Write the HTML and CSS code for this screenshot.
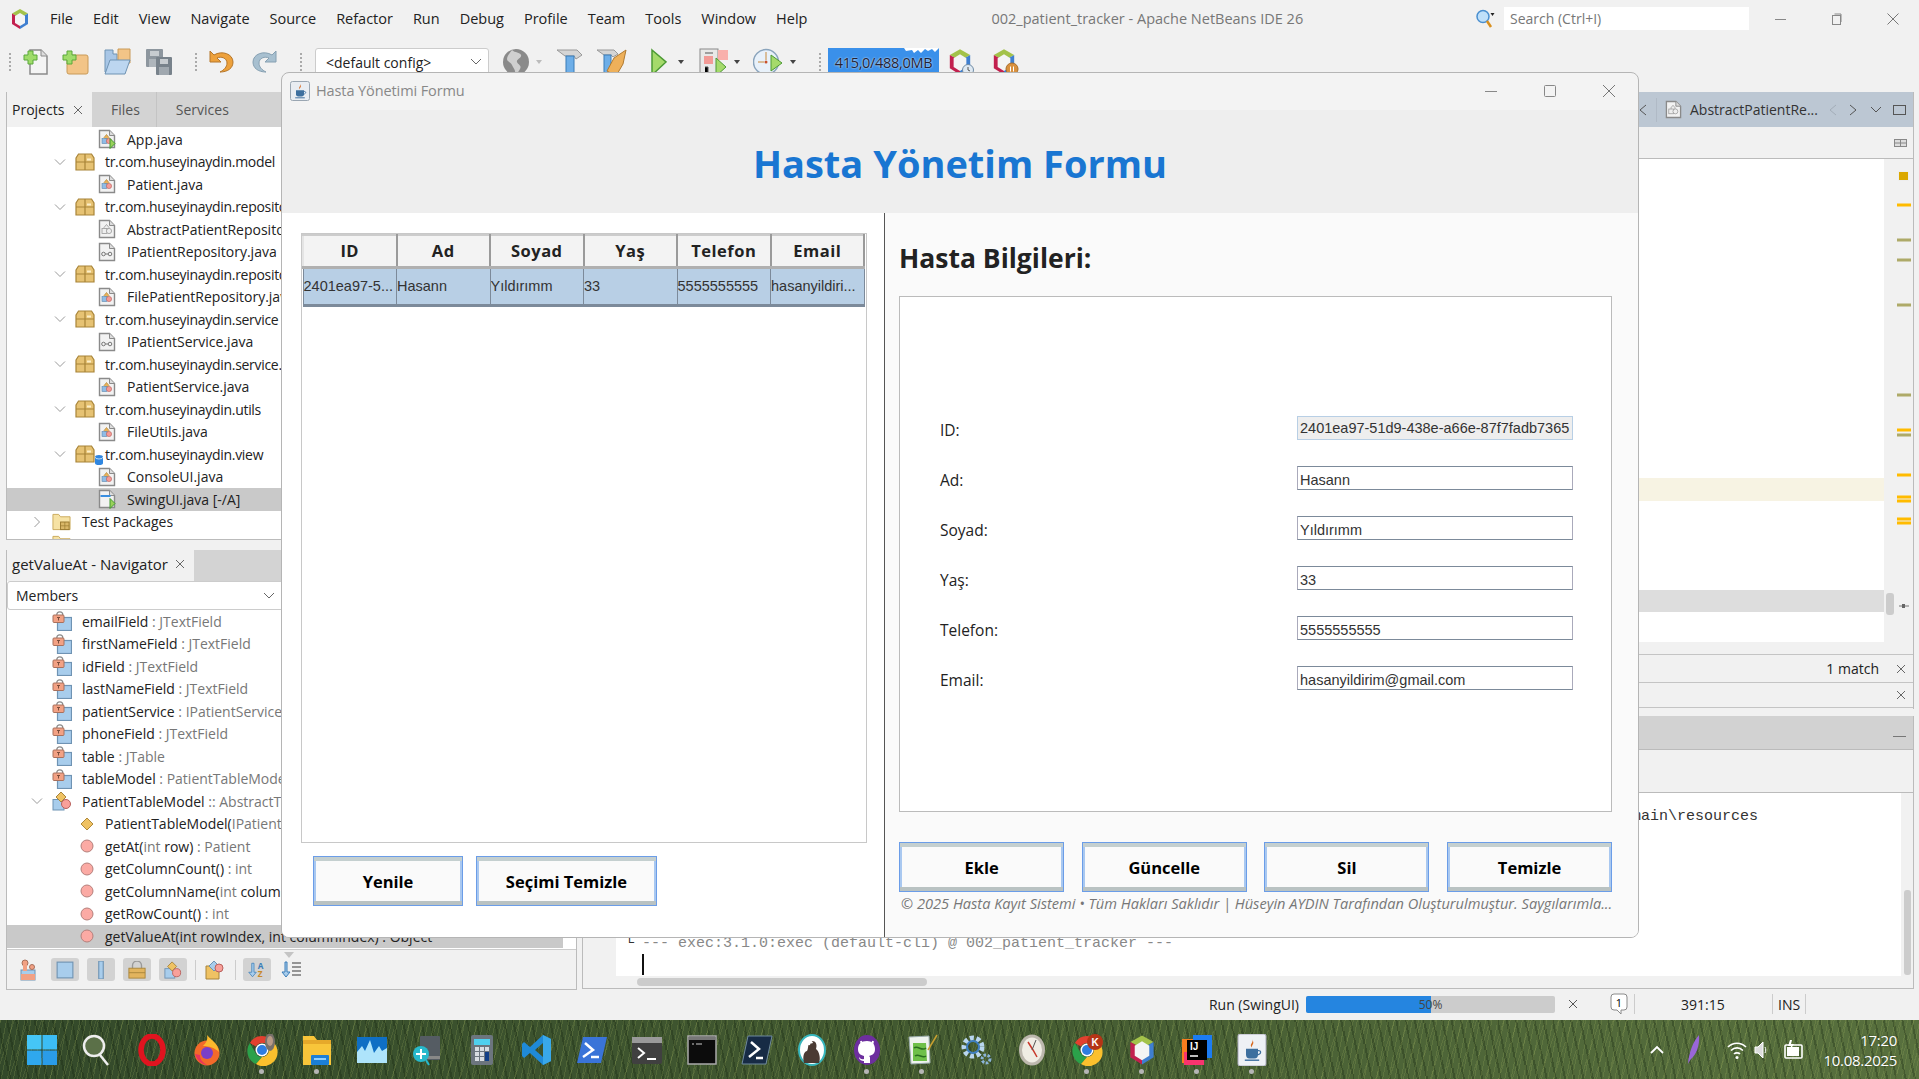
FILE: index.html
```html
<!DOCTYPE html>
<html lang="tr">
<head>
  <meta charset="UTF-8">
  <title>002_patient_tracker - Apache NetBeans IDE 26</title>
  <link rel="stylesheet" href="styles.css">
</head>
<body>

  <!-- shared icons -->
  <svg class="defs" aria-hidden="true">
    <symbol id="nb" viewBox="0 0 20 22">
      <path d="M10 1 2 5.500 10 10l8-4.500z" fill="#a3c24a"/>
      <path d="M2 5.500V16l8 5V10z" fill="#c2204e"/>
      <path d="M18 5.500V16l-8 5V10z" fill="#3f7fd0"/>
      <path d="M10 5 5 8v7l5 3 5-3V8z" fill="#f4f4f4"/>
    </symbol>
    <symbol id="doc" viewBox="0 0 18 20">
      <path d="M1.500 1.500h10l5 5v12h-15z" fill="#f2f2f2" stroke="#8a8a8a" stroke-width="1.400"/>
      <path d="M11.500 1.500v5h5" fill="#ddd" stroke="#8a8a8a"/>
    </symbol>
    <symbol id="shapes" viewBox="0 0 18 20">
      <path d="M8.500 5.500 11 8.500 8.500 11 6 8.500z" fill="#eab25a" stroke="#a87c2c" stroke-width=".6"/>
      <rect x="4" y="9.500" width="5" height="5" fill="#8fbce6" stroke="#5a86ae" stroke-width=".6"/>
      <circle cx="11" cy="12" r="2.600" fill="#f59b96" stroke="#b8605c" stroke-width=".6"/>
    </symbol>
    <symbol id="f-class" viewBox="0 0 18 20"><use href="#doc"/><use href="#shapes"/></symbol>
    <symbol id="f-run" viewBox="0 0 18 20">
      <use href="#doc"/><use href="#shapes"/>
      <path d="M12 9.500l5 5-5 5z" fill="#9ad05a" stroke="#3f9a2e"/>
    </symbol>
    <symbol id="f-abstract" viewBox="0 0 18 20">
      <use href="#doc"/>
      <path d="M8.500 5.500 11 8.500 8.500 11 6 8.500z" fill="#eee" stroke="#999" stroke-width=".8"/>
      <rect x="4" y="9.500" width="5" height="5" fill="#eee" stroke="#999" stroke-width=".8"/>
      <circle cx="11" cy="12" r="2.600" fill="#eee" stroke="#999" stroke-width=".8"/>
    </symbol>
    <symbol id="f-iface" viewBox="0 0 18 20">
      <use href="#doc"/>
      <circle cx="5.500" cy="12" r="1.800" fill="none" stroke="#777"/>
      <circle cx="12" cy="12" r="1.800" fill="none" stroke="#777"/>
      <path d="M7.300 12h2.900" stroke="#777"/>
    </symbol>
    <symbol id="f-swing" viewBox="0 0 18 20">
      <use href="#doc"/>
      <rect x="2.500" y="6" width="10" height="2" fill="#3a8fe0"/>
      <path d="M12 9.500l5 5-5 5z" fill="#9ad05a" stroke="#3f9a2e"/>
    </symbol>
    <symbol id="pkg" viewBox="0 0 20 18">
      <path d="M1 5 3.500 1h13L19 5v12H1z" fill="#e6c273" stroke="#a88438" stroke-width="1.200"/>
      <path d="M1 9h18M10 1v16" stroke="#a88438" stroke-width="1.200"/>
      <rect x="12" y="5.500" width="4" height="2" fill="#fbeec9"/>
    </symbol>
    <symbol id="folder" viewBox="0 0 20 18">
      <path d="M1 1h6l2 2.500h10V17H1z" fill="#f6e2a4" stroke="#c9a95a"/>
      <rect x="9" y="9" width="9" height="8" fill="#d9b768" stroke="#98782f"/>
      <path d="M9 13h9M13.500 9v8" stroke="#98782f" stroke-width=".7"/>
    </symbol>
    <symbol id="field" viewBox="0 0 20 20">
      <rect x="5.500" y="6.500" width="14" height="13" fill="#a8cdec" stroke="#6f93b3" stroke-width="1.200"/>
      <path d="M2.800 4.500V3a3 3 0 0 1 6 0v1.500" fill="none" stroke="#8a8a8a" stroke-width="1.200" transform="translate(2 .8)"/>
      <rect x="1" y="4" width="11" height="7.500" rx="1" fill="#f2a184" stroke="#a8705c"/>
      <path d="M5 6.500h3M6.500 6.500v3" stroke="#7d4d3a"/>
    </symbol>
    <symbol id="navclass" viewBox="0 0 20 20">
      <rect x="1" y="8.500" width="11" height="10.500" fill="#a8cdec" stroke="#6f93b3"/>
      <path d="M9 1l5 5-5 5-5-5z" fill="#efc263" stroke="#a8843a"/>
      <circle cx="14" cy="13" r="4.500" fill="#f8a09a" stroke="#b8605c"/>
    </symbol>
    <symbol id="ctor" viewBox="0 0 14 14"><path d="M7 1l6 6-6 6-6-6z" fill="#efc263" stroke="#b08a3a"/></symbol>
    <symbol id="method" viewBox="0 0 14 14"><circle cx="7" cy="7" r="6" fill="#fbaaa4" stroke="#b57f7b"/></symbol>
    <symbol id="cup" viewBox="0 0 20 20">
      <path d="M10 1c2 3-3 4 0 7-1-2 3-3 0-7z" fill="#d8691f"/>
      <path d="M5 9h10v5a3 3 0 0 1-3 3H8a3 3 0 0 1-3-3z" fill="#3d6f9e"/>
      <path d="M15 10.500c3-.5 3 3-.5 3.500" fill="none" stroke="#3d6f9e"/>
      <path d="M4 18.500h12" stroke="#3d6f9e" stroke-width="1.200"/>
    </symbol>
    <symbol id="chrome" viewBox="0 0 32 32">
      <path d="M16 2a14 14 0 0 1 12.100 7H16a7 7 0 0 0-6.100 3.500L3.900 9A14 14 0 0 1 16 2z" fill="#e2402f"/>
      <path d="M3.900 9l6 10.500A7 7 0 0 0 16 23l-6 7A14 14 0 0 1 3.900 9z" fill="#2ba14a"/>
      <path d="M28.100 9A14 14 0 0 1 10 30l6-7a7 7 0 0 0 6-10.500z" fill="#fbc02d"/>
      <circle cx="16" cy="16" r="6.500" fill="#fff"/><circle cx="16" cy="16" r="5" fill="#2f7de1"/>
    </symbol>
    <symbol id="chev-d" viewBox="0 0 12 12"><path d="M1 3.500l5 5 5-5" fill="none" stroke="#9a9a9a"/></symbol>
    <symbol id="chev-r" viewBox="0 0 12 12"><path d="M3.500 1l5 5-5 5" fill="none" stroke="#9a9a9a"/></symbol>
  </svg>

  <header class="titlebar">
    <svg class="app-logo"><use href="#nb"/></svg>
    <nav class="menu">
      <span>File</span><span>Edit</span><span>View</span><span>Navigate</span><span>Source</span><span>Refactor</span><span>Run</span>
      <span>Debug</span><span>Profile</span><span>Team</span><span>Tools</span><span>Window</span><span>Help</span>
    </nav>
    <div class="app-title">002_patient_tracker - Apache NetBeans IDE 26</div>
    <svg class="search-ic" viewBox="0 0 20 20">
      <circle cx="8" cy="7.500" r="6" fill="#bfe0fa" stroke="#4a8fd0" stroke-width="1.500"/>
      <path d="M12 12l4 6" stroke="#d9901f" stroke-width="2.500"/>
      <path d="M15.500 4h4l-2 3z" fill="#222"/>
    </svg>
    <div class="search-box">Search (Ctrl+I)</div>
    <div class="win-btns">
      <svg viewBox="0 0 12 12"><path d="M0 6.500h11" stroke="#888"/></svg>
      <svg viewBox="0 0 12 12"><rect x="1.500" y="2.500" width="8" height="9" fill="none" stroke="#888"/><path d="M3.500 1h6.500v8" fill="none" stroke="#888"/></svg>
      <svg viewBox="0 0 12 12"><path d="M.5.500l11 11M11.500.500l-11 11" stroke="#777"/></svg>
    </div>
  </header>

  <div class="toolbar">
    <i class="grip g1"></i>
    <svg class="t28 ml11" viewBox="0 0 28 28">
      <path d="M8 2h11l6 6v18H8z" fill="#f4f4f4" stroke="#8a8a8a" stroke-width="1.500"/><path d="M19 2v6h6" fill="#ddd" stroke="#8a8a8a"/>
      <path d="M6 3v4H2v5h4v4h5v-4h4V7h-4V3z" fill="#9fdc6a" stroke="#5aa83a"/>
    </svg>
    <svg class="t28 ml11" viewBox="0 0 28 28">
      <rect x="6" y="7" width="21" height="19" rx="2" fill="#f2c487" stroke="#c99a58"/>
      <path d="M6 3v4H2v5h4v4h5v-4h4V7h-4V3z" fill="#9fdc6a" stroke="#5aa83a"/>
    </svg>
    <svg class="t28 ml14" viewBox="0 0 28 28">
      <path d="M2 2h8v4h4v18H2z" fill="#a8c6e6" stroke="#6f93b3"/>
      <path d="M15 1h12v14H15z" fill="#f2c487" stroke="#c99a58"/>
      <path d="M7 12h20l-5 14H2z" fill="#bcd6f0" stroke="#6f93b3"/>
    </svg>
    <svg class="t28 ml14" viewBox="0 0 28 28">
      <rect x="1" y="1" width="17" height="18" rx="1" fill="#8d969e"/><rect x="5" y="3" width="9" height="5" fill="#c7ccd0"/><rect x="4" y="11" width="11" height="8" fill="#aeb5bb"/>
      <rect x="11" y="9" width="16" height="18" rx="1" fill="#78828b"/><rect x="15" y="11" width="8" height="5" fill="#c7ccd0"/><rect x="14" y="19" width="10" height="8" fill="#a0a8af"/>
    </svg>
    <i class="grip ml22"></i>
    <svg class="t28 ml11" viewBox="0 0 28 28">
      <path d="M2 3v11h11l-4-4c4-2 10 0 10 5 0 4-3 7-7 9 8 0 13-4 13-10C25 6 14 2 6 7z" fill="#eda13c" stroke="#b5762a"/>
    </svg>
    <svg class="t28 ml14" viewBox="0 0 28 28">
      <path d="M26 3v11H15l4-4c-4-2-10 0-10 5 0 4 3 7 7 9-8 0-13-4-13-10C3 6 14 2 22 7z" fill="#a8c0d0" stroke="#86a0b2"/>
    </svg>
    <i class="grip ml22"></i>
    <div class="config ml13"><span>&lt;default config&gt;</span><svg viewBox="0 0 12 8"><path d="M1 1l5 5 5-5" fill="none" stroke="#666"/></svg></div>
    <svg class="t28 ml13" viewBox="0 0 28 28">
      <circle cx="14" cy="14" r="13" fill="#8a8a8a"/>
      <path d="M10 2c3 3 8 2 9 5s-5 4-4 7 5 3 3 7-4 5-5 5c1-4-2-6-3-9s-5-3-5-6 3-6 5-9z" fill="#cfcfcf"/>
    </svg>
    <i class="drop ml6 light"></i>
    <svg class="t28 ml14" viewBox="0 0 28 28">
      <path d="M1 2h20l5 5-6 4-2-3H9z" fill="#d5d5d5" stroke="#999"/>
      <rect x="10" y="8" width="8" height="20" fill="#6daee8" stroke="#3a7db8"/>
    </svg>
    <svg class="t32 ml12" viewBox="0 0 32 28">
      <path d="M1 2h17l4 4-5 3-2-2H8z" fill="#d5d5d5" stroke="#999"/>
      <rect x="8" y="7" width="7" height="21" fill="#6daee8" stroke="#3a7db8"/>
      <path d="M18 10l12-8-3 14-7 12-9-5z" fill="#eeb05a" stroke="#b07a30"/>
    </svg>
    <svg class="t16 ml23" viewBox="0 0 16 28"><path d="M1 2l14 12L1 27z" fill="#a5da6b" stroke="#4c9a34" stroke-width="1.500"/></svg>
    <i class="drop ml11"></i>
    <svg class="t30 ml15" viewBox="0 0 30 28">
      <rect x="1" y="1" width="18" height="26" fill="#e8e8e8" stroke="#8a8a8a"/>
      <rect x="5" y="8" width="9" height="8" fill="#f29a96"/><rect x="19" y="2" width="10" height="10" fill="#f9b0ac"/>
      <path d="M17 10l10 9-10 9z" fill="#a5da6b" stroke="#4c9a34"/>
      <path d="M6 5h8M6 19h3v6H6" stroke="#555"/>
    </svg>
    <i class="drop ml5"></i>
    <svg class="t30 ml13" viewBox="0 0 30 28">
      <circle cx="13" cy="14" r="12.500" fill="#e8f1fa" stroke="#8aa4bc" stroke-width="1.500"/>
      <path d="M13 4v8M5 14h6" stroke="#c88a3a"/><circle cx="13" cy="14" r="1.500" fill="#c8502a"/>
      <path d="M18 7l11 8-11 8z" fill="#a5da6b" stroke="#4c9a34"/>
    </svg>
    <i class="drop ml7"></i>
    <i class="grip ml23"></i>
    <div class="memory ml7">
      <svg viewBox="0 0 111 32" preserveAspectRatio="none"><path d="M0 0h76l2 3 6-1 2 3 4-3 3 3 4-4 3 2 4-2 3 3 4-4v32H0z" fill="#3a90ea"/></svg>
      <span>415,0/488,0MB</span>
    </div>
    <svg class="t28 ml7" viewBox="0 0 28 28"><use href="#nb"/><circle cx="22" cy="22" r="5.500" fill="#dfe9f2" stroke="#6f8ba5"/><path d="M22 19v3l2 1" stroke="#555" fill="none"/></svg>
    <svg class="t30 ml15" viewBox="0 0 30 28"><use href="#nb"/><circle cx="23" cy="21" r="6" fill="#d9913f" stroke="#a96e2a"/><path d="M21.500 18.500v5M24.500 18.500v5" stroke="#fff"/></svg>
  </div>

  <main class="workspace">
    <section class="left-col">
      <div class="panel projects">
        <div class="tabs">
          <div class="tab active">Projects <svg class="x" viewBox="0 0 10 10"><path d="M1 1l8 8M9 1 1 9" stroke="#666"/></svg></div>
          <div class="tab">Files</div>
          <div class="tab">Services</div>
        </div>
        <div class="tree">
          <div class="row file"><svg class="f"><use href="#f-run"/></svg>App.java</div>
          <div class="row pk"><svg class="chev"><use href="#chev-d"/></svg><svg class="p"><use href="#pkg"/></svg>tr.com.huseyinaydin.model</div>
          <div class="row file"><svg class="f"><use href="#f-class"/></svg>Patient.java</div>
          <div class="row pk"><svg class="chev"><use href="#chev-d"/></svg><svg class="p"><use href="#pkg"/></svg>tr.com.huseyinaydin.repository</div>
          <div class="row file"><svg class="f"><use href="#f-abstract"/></svg>AbstractPatientRepository.java</div>
          <div class="row file"><svg class="f"><use href="#f-iface"/></svg>IPatientRepository.java</div>
          <div class="row pk"><svg class="chev"><use href="#chev-d"/></svg><svg class="p"><use href="#pkg"/></svg>tr.com.huseyinaydin.repository.impl</div>
          <div class="row file"><svg class="f"><use href="#f-class"/></svg>FilePatientRepository.java</div>
          <div class="row pk"><svg class="chev"><use href="#chev-d"/></svg><svg class="p"><use href="#pkg"/></svg>tr.com.huseyinaydin.service</div>
          <div class="row file"><svg class="f"><use href="#f-iface"/></svg>IPatientService.java</div>
          <div class="row pk"><svg class="chev"><use href="#chev-d"/></svg><svg class="p"><use href="#pkg"/></svg>tr.com.huseyinaydin.service.impl</div>
          <div class="row file"><svg class="f"><use href="#f-class"/></svg>PatientService.java</div>
          <div class="row pk"><svg class="chev"><use href="#chev-d"/></svg><svg class="p"><use href="#pkg"/></svg>tr.com.huseyinaydin.utils</div>
          <div class="row file"><svg class="f"><use href="#f-class"/></svg>FileUtils.java</div>
          <div class="row pk"><svg class="chev"><use href="#chev-d"/></svg><svg class="p"><use href="#pkg"/></svg><svg class="badge" viewBox="0 0 8 10"><path d="M0 2a4 2 0 0 1 8 0v6a4 2 0 0 1-8 0z" fill="#2f86e0"/><path d="M0 2a4 2 0 0 0 8 0" fill="none" stroke="#bcdcf8"/></svg>tr.com.huseyinaydin.view</div>
          <div class="row file"><svg class="f"><use href="#f-class"/></svg>ConsoleUI.java</div>
          <div class="row file selected"><svg class="f"><use href="#f-swing"/></svg>SwingUI.java [-/A]</div>
          <div class="row top"><svg class="chev"><use href="#chev-r"/></svg><svg class="d"><use href="#folder"/></svg>Test Packages</div>
          <div class="row top"><svg class="chev"><use href="#chev-r"/></svg><svg class="d"><use href="#folder"/></svg>Dependencies</div>
        </div>
      </div>

      <div class="panel navigator">
        <div class="tabs short">
          <div class="tab active nav-tab">getValueAt - Navigator <svg class="x" viewBox="0 0 10 10"><path d="M1 1l8 8M9 1 1 9" stroke="#666"/></svg></div>
        </div>
        <div class="members"><span>Members</span><svg viewBox="0 0 12 8"><path d="M1 1l5 5 5-5" fill="none" stroke="#666"/></svg></div>
        <div class="tree nav-tree">
          <div class="row nf"><svg class="n"><use href="#field"/></svg><span>emailField <em>: JTextField</em></span></div>
          <div class="row nf"><svg class="n"><use href="#field"/></svg><span>firstNameField <em>: JTextField</em></span></div>
          <div class="row nf"><svg class="n"><use href="#field"/></svg><span>idField <em>: JTextField</em></span></div>
          <div class="row nf"><svg class="n"><use href="#field"/></svg><span>lastNameField <em>: JTextField</em></span></div>
          <div class="row nf"><svg class="n"><use href="#field"/></svg><span>patientService <em>: IPatientService</em></span></div>
          <div class="row nf"><svg class="n"><use href="#field"/></svg><span>phoneField <em>: JTextField</em></span></div>
          <div class="row nf"><svg class="n"><use href="#field"/></svg><span>table <em>: JTable</em></span></div>
          <div class="row nf"><svg class="n"><use href="#field"/></svg><span>tableModel <em>: PatientTableModel</em></span></div>
          <div class="row top"><svg class="chev"><use href="#chev-d"/></svg><svg class="n"><use href="#navclass"/></svg><span>PatientTableModel <em>:: AbstractTableModel</em></span></div>
          <div class="row nm"><svg class="m"><use href="#ctor"/></svg><span>PatientTableModel(<em>IPatientService service</em>)</span></div>
          <div class="row nm"><svg class="m"><use href="#method"/></svg><span>getAt(<em>int</em> row) <em>: Patient</em></span></div>
          <div class="row nm"><svg class="m"><use href="#method"/></svg><span>getColumnCount() <em>: int</em></span></div>
          <div class="row nm"><svg class="m"><use href="#method"/></svg><span>getColumnName(<em>int</em> column) <em>: String</em></span></div>
          <div class="row nm"><svg class="m"><use href="#method"/></svg><span>getRowCount() <em>: int</em></span></div>
          <div class="row nm selected short-sel"><svg class="m"><use href="#method"/></svg><span>getValueAt(int rowIndex, int columnIndex) : Object</span></div>
        </div>
        <div class="nav-tools">
          <svg class="nt" viewBox="0 0 16 24"><rect x="1" y="12" width="14" height="10" fill="#a8cdec" stroke="#6f93b3"/><rect x="1" y="16" width="14" height="6" fill="#f2a184"/><circle cx="5" cy="5" r="3" fill="#f2a184" stroke="#a8705c"/><rect x="3" y="7" width="4" height="6" fill="#f2a184"/><circle cx="12" cy="9" r="2.500" fill="#f2a184" stroke="#a8705c"/></svg>
          <span class="nb on"><svg viewBox="0 0 16 16"><rect x="1" y="1" width="14" height="14" fill="#a8cdec" stroke="#6f93b3"/></svg></span>
          <span class="nb on"><svg viewBox="0 0 16 16"><rect x="6" y="0" width="4" height="16" fill="#a8cdec" stroke="#6f93b3"/></svg></span>
          <span class="nb on"><svg viewBox="0 0 20 20"><path d="M5 9V5a5 5 0 0 1 10 0v4" fill="none" stroke="#999" stroke-width="1.500"/><rect x="1" y="8" width="18" height="11" fill="#e2b45e" stroke="#a8843a"/><path d="M1 13h18" stroke="#a8843a"/></svg></span>
          <span class="nb on"><svg viewBox="0 0 20 20"><use href="#navclass"/></svg></span>
          <i class="nsep"></i>
          <svg class="nt w20" viewBox="0 0 20 20"><path d="M1 6h13v13H1z" fill="#efc263" stroke="#a8843a"/><path d="M9 1l5 5-5 5-5-5z" fill="#a8cdec" stroke="#6f93b3"/><circle cx="14" cy="8" r="4" fill="#f8a09a" stroke="#b8605c"/></svg>
          <i class="nsep"></i>
          <span class="nb on"><svg viewBox="0 0 24 22"><path d="M5 2v12H1l5 6 5-6H8V2z" fill="#a8cdec" stroke="#3a7db8"/><text x="13" y="10" class="az blue">A</text><text x="13" y="20" class="az orange">Z</text></svg></span>
          <svg class="nt w20" viewBox="0 0 20 20"><path d="M4 2v10H1l4 5 4-5H6V2z" fill="#a8cdec" stroke="#3a7db8"/><path d="M11 3h9M11 7h9M11 11h9M11 15h9" stroke="#777" stroke-width="1.500"/></svg>
          <i class="scroll-down"></i>
        </div>
      </div>
    </section>

    <section class="right-col">
      <div class="panel editor">
        <div class="doc-tabs">
          <svg class="ctl" viewBox="0 0 10 12"><path d="M8 1 2 6l6 5" fill="none" stroke="#555"/></svg>
          <i class="doc-sep"></i>
          <svg class="doc-ic"><use href="#f-abstract"/></svg>
          <span class="doc-name">AbstractPatientRe...</span>
          <svg class="ctl ml10" viewBox="0 0 10 12"><path d="M8 1 2 6l6 5" fill="none" stroke="#a3adb8"/></svg>
          <svg class="ctl ml10" viewBox="0 0 10 12"><path d="M2 1l6 5-6 5" fill="none" stroke="#555"/></svg>
          <svg class="ctl wide ml12" viewBox="0 0 12 8"><path d="M1 1l5 5 5-5" fill="none" stroke="#555"/></svg>
          <svg class="ctl box ml11" viewBox="0 0 13 10"><rect x=".5" y=".5" width="12" height="9" fill="none" stroke="#555"/></svg>
        </div>
        <div class="edit-tools">
          <svg viewBox="0 0 13 8"><rect x=".5" y=".5" width="12" height="7" fill="#ddd" stroke="#888"/><path d="M6.500 0v8M0 4h13" stroke="#888"/></svg>
        </div>
        <div class="edit-body">
          <div class="code">
            <div class="cur-line"></div>
            <div class="sel-line"></div>
          </div>
          <div class="v-scroll"><i></i></div>
          <svg class="stripe" viewBox="0 0 16 483">
            <rect x="2" y="12" width="11" height="10" fill="#eee"/><rect x="3" y="13" width="9" height="8" fill="#dba800"/>
            <path d="M1 46h14" stroke="#fb0" stroke-width="3"/>
            <path d="M1 81h14M1 101h14M1 146h14M1 236h14M1 276h14" stroke="#aeaa68" stroke-width="3"/>
            <path d="M1 271h14M1 316h14M1 338h14M1 342h14M1 360h14M1 364h14" stroke="#fb0" stroke-width="3"/>
            <path d="M3 447h10" stroke="#777"/><rect x="6" y="445" width="3" height="4" fill="#666"/>
          </svg>
        </div>
        <div class="find-bar"><span>1 match</span><svg class="x2" viewBox="0 0 10 10"><path d="M1 1l8 8M9 1 1 9" stroke="#666"/></svg></div>
        <div class="find-bar low"><svg class="x2" viewBox="0 0 10 10"><path d="M1 1l8 8M9 1 1 9" stroke="#666"/></svg></div>
      </div>

      <div class="panel output">
        <div class="out-head"><i class="min-line"></i></div>
        <div class="out-tools"></div>
        <div class="out-body">
          <div class="console">
            <div class="line-res">[INFO] skip non existing resourceDirectory C:\Users\husey\Desktop\002_patient_tracker\src\main\resources</div>
            <div class="line-exec"><b>└</b> --- exec:3.1.0:exec (default-cli) @ 002_patient_tracker ---</div>
            <div class="caret"></div>
            <div class="h-scroll"><i></i></div>
          </div>
          <div class="out-scroll"><i></i></div>
        </div>
      </div>
    </section>
  </main>

  <footer class="statusbar">
    <span class="run-label">Run (SwingUI)</span>
    <div class="progress"><div class="fill"></div><span>50%</span></div>
    <svg class="stop" viewBox="0 0 10 10"><path d="M1 1l8 8M9 1 1 9" stroke="#555"/></svg>
    <svg class="balloon" viewBox="0 0 18 22"><path d="M4 1h10q3 0 3 3v10q0 3-3 3h-3v4l-4-4H4q-3 0-3-3V4q0-3 3-3z" fill="#fff" stroke="#8a8a8a"/><text x="9" y="13.500" class="bal-num">1</text></svg>
    <i class="st-sep"></i>
    <span class="pos">391:15</span>
    <i class="st-sep"></i>
    <span class="ins">INS</span>
    <i class="st-sep"></i>
  </footer>

  <div class="taskbar">
    <div class="apps">
      <div class="app"><svg viewBox="0 0 32 32"><rect x="1" y="1" width="14.500" height="14.500" fill="#45c6f7"/><rect x="16.500" y="1" width="14.500" height="14.500" fill="#3cbdf5"/><rect x="1" y="16.500" width="14.500" height="14.500" fill="#2fa8ee"/><rect x="16.500" y="16.500" width="14.500" height="14.500" fill="#2a9ce8"/></svg></div>
      <div class="app"><svg viewBox="0 0 32 32"><circle cx="13" cy="12" r="10" fill="#5b7048" stroke="#eee" stroke-width="2.500"/><path d="M19 21l8 10" stroke="#eee" stroke-width="2.500"/></svg></div>
      <div class="app"><svg viewBox="0 0 32 32"><ellipse cx="16" cy="16" rx="11" ry="14" fill="none" stroke="#e0141f" stroke-width="5.500"/></svg></div>
      <div class="app"><svg viewBox="0 0 32 32"><circle cx="16" cy="19" r="12.500" fill="#f26a2a"/><path d="M16 1c4 5 11 8 12 17-4-4-10-6-16-6 3-3 5-6 4-11z" fill="#fbb82c"/><circle cx="16" cy="19" r="6" fill="#7a3fc8"/><path d="M4 20c2 7 8 11 12 11-5-3-7-6-7-10z" fill="#e8355c"/></svg></div>
      <div class="app run"><svg viewBox="0 0 32 32"><use href="#chrome"/><ellipse cx="24" cy="8" rx="5" ry="9" fill="#77706a"/><ellipse cx="24" cy="7" rx="3" ry="5" fill="#b99a86"/></svg></div>
      <div class="app run"><svg viewBox="0 0 32 32"><path d="M2 2h11l3 4h14v25H2z" fill="#f8c53a"/><rect x="2" y="6" width="28" height="4" fill="#e6a92a"/><rect x="10" y="21" width="18" height="10" rx="1" fill="#1c7fd6"/><rect x="13" y="24" width="12" height="2" fill="#8fd0ff"/></svg></div>
      <div class="app"><svg viewBox="0 0 32 32"><rect x="1" y="3" width="30" height="26" fill="#0f6fc4"/><path d="M1 18l5-6 3 5 5-11 4 13 5-7 3 5 5-3v15H1z" fill="#aee4fb"/></svg></div>
      <div class="app"><svg viewBox="0 0 32 32"><rect x="9" y="2" width="20" height="24" rx="1" fill="#555c63"/><rect x="9" y="22" width="20" height="3" fill="#888"/><circle cx="10" cy="20" r="8" fill="#27b9cc"/><path d="M10 15v10M5 20h10" stroke="#fff" stroke-width="2"/><path d="M15 26l3 5" stroke="#27b9cc" stroke-width="2"/></svg></div>
      <div class="app"><svg viewBox="0 0 32 32"><rect x="5" y="1" width="22" height="30" rx="2" fill="#6c757e"/><rect x="8" y="5" width="16" height="6" fill="#4fd0ee"/><path d="M9 13h4v4H9zM14 13h4v4h-4zM19 13h4v4h-4zM9 18h4v4H9zM14 18h4v4h-4zM9 23h4v4H9zM14 23h4v4h-4z" fill="#d8dde2"/><rect x="19" y="18" width="4" height="9" fill="#123f86"/></svg></div>
      <div class="app"><svg viewBox="0 0 32 32"><path d="M22 1l8 4v22l-8 4-13-12-6 5-2-2V10l2-2 6 5zM22 9l-8 7 8 7z" fill="#1f8ad8"/><path d="M22 1l8 4v22l-8 4z" fill="#39a8ea"/></svg></div>
      <div class="app"><svg viewBox="0 0 32 32"><path d="M7 3h24l-6 26H1z" fill="#3a74d8"/><path d="M9 9l8 7-10 7" fill="none" stroke="#fff" stroke-width="2.500"/><path d="M15 23h8" stroke="#fff" stroke-width="2.500"/></svg></div>
      <div class="app"><svg viewBox="0 0 32 32"><rect x="1" y="3" width="30" height="27" rx="2" fill="#404040"/><rect x="1" y="3" width="30" height="6" fill="#9a9a9a"/><path d="M7 14l6 5-6 5" fill="none" stroke="#fff" stroke-width="2"/><path d="M16 25h9" stroke="#fff" stroke-width="2"/></svg></div>
      <div class="app"><svg viewBox="0 0 32 32"><rect x="2" y="2" width="28" height="28" fill="#0c0c0c" stroke="#aaa" stroke-width="1.500"/><rect x="3" y="3" width="26" height="3" fill="#777"/><path d="M6 10h2M10 10h6" stroke="#ccc"/></svg></div>
      <div class="app"><svg viewBox="0 0 32 32"><path d="M7 2h24l-6 28H1z" fill="#172b45" stroke="#6f8a9e"/><path d="M10 8l8 7-10 8" fill="none" stroke="#fff" stroke-width="2.500"/><path d="M15 24h7" stroke="#fff" stroke-width="2.500"/></svg></div>
      <div class="app"><svg viewBox="0 0 32 32"><ellipse cx="16" cy="16" rx="13" ry="15" fill="#fff" stroke="#37b6bd" stroke-width="2"/><path d="M8 29c-2-8 1-12 3-12 2-3 0-9 5-10 5 0 5 5 4 8 3 2 5 9 3 14z" fill="#4a3a33"/><circle cx="13" cy="10" r="1.300" fill="#fff"/><path d="M9 9c3-4 7-3 8 0-2 1-6 1-8 0z" fill="#fff"/></svg></div>
      <div class="app run"><svg viewBox="0 0 32 32"><ellipse cx="16" cy="16" rx="13" ry="15" fill="#6d2f9e"/><path d="M16 7c-6 0-9 3-9 8 0 4 2 6 6 7v3c-3 1-4-1-5-2 0 3 3 4 5 4v2h6v-5c0-1 0-1-1-2 4-1 6-3 6-7 0-5-3-8-8-8z" fill="#fff"/><path d="M10 7l1 4M22 7l-1 4" stroke="#fff" stroke-width="2"/></svg></div>
      <div class="app run"><svg viewBox="0 0 32 32"><path d="M3 3l20-1 1 27-19 1z" fill="#eef3ee" stroke="#9aa"/><path d="M7 9h13l1 18H7z" fill="#6fc04a"/><path d="M8 14c4-3 8 4 12 0M9 22c4-3 7 3 11 0" fill="none" stroke="#2a6e1f" stroke-width="1.500"/><path d="M22 16 31 1" stroke="#c8a030" stroke-width="1.500"/></svg></div>
      <div class="app"><svg viewBox="0 0 32 32"><circle cx="12" cy="13" r="9" fill="none" stroke="#b9d6ef" stroke-width="5" stroke-dasharray="4 2.500"/><circle cx="12" cy="13" r="6" fill="none" stroke="#3f7fc0" stroke-width="2"/><circle cx="25" cy="25" r="4" fill="none" stroke="#8bb4d8" stroke-width="3" stroke-dasharray="2.500 1.500"/></svg></div>
      <div class="app"><svg viewBox="0 0 32 32"><ellipse cx="16" cy="16" rx="13" ry="15.500" fill="#bdb8ae"/><ellipse cx="16" cy="16" rx="10" ry="12.500" fill="#f0ede4"/><path d="M12 8l5 8 4 7" stroke="#c8382a" stroke-width="1.500" fill="none"/><path d="M20 6l-4 10" stroke="#555"/></svg></div>
      <div class="app run"><svg viewBox="0 0 32 32"><use href="#chrome"/><circle cx="24" cy="8" r="8" fill="#b53416"/><text x="24" y="12" class="k-badge">K</text></svg></div>
      <div class="app run"><svg viewBox="0 0 20 22"><use href="#nb"/></svg></div>
      <div class="app run"><svg viewBox="0 0 32 32"><rect x="1" y="5" width="20" height="24" fill="#f87c1e"/><rect x="12" y="1" width="19" height="23" fill="#1c7cf2"/><rect x="3" y="18" width="20" height="13" fill="#f8346e"/><rect x="6" y="6" width="20" height="20" fill="#000"/><text x="9" y="16" class="ij">IJ</text><path d="M9 22h8" stroke="#fff" stroke-width="1.500"/></svg></div>
      <div class="app run"><svg viewBox="0 0 32 32"><rect x="2" y="0" width="28" height="32" rx="2" fill="#eef1f5" stroke="#aab"/><use href="#cup" x="4" y="4" width="24" height="24"/></svg></div>
    </div>
    <div class="tray">
      <svg class="tr-up" viewBox="0 0 14 10"><path d="M1 8l6-6 6 6" fill="none" stroke="#fff" stroke-width="1.800"/></svg>
      <svg class="tr-pen" viewBox="0 0 14 32"><path d="M12 1C6 8 2 18 1 30c1-2 2-4 3-5 5-4 9-13 8-24z" fill="#9a66d8"/></svg>
      <svg class="tr-wifi" viewBox="0 0 20 20"><path d="M1 7c5-5 13-5 18 0M4 10.500c3.500-3.500 8.500-3.500 12 0M7 14c1.500-1.500 4.500-1.500 6 0" fill="none" stroke="#fff" stroke-width="1.700"/><circle cx="10" cy="17.500" r="1.500" fill="#fff"/></svg>
      <svg class="tr-vol" viewBox="0 0 14 20"><path d="M1 7h3l5-5v16l-5-5H1z" fill="#ddd" stroke="#fff"/><path d="M11 7c1 2 1 4 0 6" fill="none" stroke="#fff"/></svg>
      <svg class="tr-bat" viewBox="0 0 20 20"><rect x="1" y="5" width="17" height="13" rx="1" fill="none" stroke="#fff" stroke-width="1.600"/><rect x="3" y="7" width="12" height="9" fill="#fff"/><path d="M6 0 4 6h3l-1 4 4-6H7l1-4z" fill="#fff"/></svg>
      <div class="clock"><div>17:20</div><div>10.08.2025</div></div>
    </div>
  </div>

  <!-- running dialog, floats over the IDE -->
  <section class="dialog">
    <div class="dlg-title">
      <svg class="dlg-ic" viewBox="0 0 20 20"><rect x=".5" y=".5" width="19" height="19" rx="2" fill="#e9edf2" stroke="#9aa6b2"/><use href="#cup" x="2" y="2" width="16" height="16"/></svg>
      <span>Hasta Yönetimi Formu</span>
      <div class="dlg-btns">
        <svg viewBox="0 0 14 14"><path d="M1 7.500h12" stroke="#888"/></svg>
        <svg viewBox="0 0 14 14"><rect x="1.500" y="1.500" width="11" height="11" rx="1" fill="none" stroke="#888"/></svg>
        <svg viewBox="0 0 14 14"><path d="M1 1l12 12M13 1 1 13" stroke="#777"/></svg>
      </div>
    </div>
    <h1 class="dlg-heading">Hasta Yönetim Formu</h1>
    <div class="split">
      <div class="pane-list">
        <div class="table-wrap">
          <table class="patients">
            <thead>
              <tr><th>ID</th><th>Ad</th><th>Soyad</th><th>Yaş</th><th>Telefon</th><th>Email</th></tr>
            </thead>
            <tbody>
              <tr><td>2401ea97-5...</td><td>Hasann</td><td>Yıldırımm</td><td>33</td><td>5555555555</td><td>hasanyildiri...</td></tr>
            </tbody>
          </table>
        </div>
        <div class="list-btns">
          <button class="btn yenile">Yenile</button>
          <button class="btn secimi">Seçimi Temizle</button>
        </div>
      </div>
      <div class="pane-form">
        <h2>Hasta Bilgileri:</h2>
        <div class="form-box">
          <label>ID:</label><input class="readonly" value="2401ea97-51d9-438e-a66e-87f7fadb7365">
          <label>Ad:</label><input value="Hasann">
          <label>Soyad:</label><input value="Yıldırımm">
          <label>Yaş:</label><input value="33">
          <label>Telefon:</label><input value="5555555555">
          <label>Email:</label><input value="hasanyildirim@gmail.com">
        </div>
        <div class="form-btns">
          <button class="btn">Ekle</button>
          <button class="btn">Güncelle</button>
          <button class="btn">Sil</button>
          <button class="btn">Temizle</button>
        </div>
        <p class="copy">© 2025 Hasta Kayıt Sistemi • Tüm Hakları Saklıdır | Hüseyin AYDIN Tarafından Oluşturulmuştur. Saygılarımla...</p>
      </div>
    </div>
  </section>

</body>
</html>
```

FILE: styles.css
```css
* {
  box-sizing: border-box;
}

html, body {
  margin: 0;
  height: 100%;
}

body {
  width: 1919px;
  height: 1079px;
  overflow: hidden;
  display: flex;
  flex-direction: column;
  position: relative;
  background: #f1f1f1;
  font-family: "Open Sans", "Noto Sans", sans-serif;
  font-size: 14px;
  color: #222;
}

.defs {
  position: absolute;
  width: 0;
  height: 0;
}

/* title bar */
.titlebar {
  height: 37px;
  display: flex;
  align-items: center;
  flex-shrink: 0;
}

.app-logo {
  width: 20px;
  height: 22px;
  margin-left: 10px;
}

.menu {
  display: flex;
  gap: 20px;
  margin-left: 20px;
  font-size: 14.500px;
}

.app-title {
  margin-left: 184px;
  color: #777;
  font-size: 14.500px;
}

.search-ic {
  width: 20px;
  height: 20px;
  margin-left: auto;
}

.search-box {
  width: 245px;
  height: 23px;
  margin-left: 9px;
  padding-left: 6px;
  background: #fff;
  color: #777;
  line-height: 23px;
}

.win-btns {
  display: flex;
  gap: 44px;
  margin: 0 20px 0 26px;
}

.win-btns svg {
  width: 12px;
  height: 12px;
}

/* main toolbar */
.toolbar {
  height: 55px;
  flex-shrink: 0;
  display: flex;
  align-items: flex-start;
  padding-top: 11px;
}

.toolbar svg {
  height: 28px;
  flex-shrink: 0;
}

.t16 { width: 16px; }
.t28 { width: 28px; }
.t30 { width: 30px; }
.t32 { width: 32px; }

.ml5 { margin-left: 5px; }
.ml6 { margin-left: 6px; }
.ml7 { margin-left: 7px; }
.ml10 { margin-left: 10px; }
.ml11 { margin-left: 11px; }
.ml12 { margin-left: 12px; }
.ml13 { margin-left: 13px; }
.ml14 { margin-left: 14px; }
.ml15 { margin-left: 15px; }
.ml22 { margin-left: 22px; }
.ml23 { margin-left: 23px; }

.grip {
  width: 2px;
  height: 20px;
  margin-top: 5px;
  background: repeating-linear-gradient(#aaa 0 2px, transparent 2px 4px);
}

.g1 { margin-left: 9px; }

.drop {
  width: 0;
  height: 0;
  margin-top: 12px;
  border: 3px solid transparent;
  border-top: 4px solid #444;
}

.drop.light {
  border-top-color: #bbb;
}

.config {
  width: 174px;
  height: 28px;
  display: flex;
  align-items: center;
  justify-content: space-between;
  padding: 0 6px 0 10px;
  background: #fff;
  border: 1px solid #ccc;
  border-radius: 3px;
}

.config svg {
  width: 12px;
  height: 8px;
}

.memory {
  width: 111px;
  height: 32px;
  position: relative;
  text-align: center;
  line-height: 29px;
  font-size: 14.500px;
  letter-spacing: -0.3px;
  color: #223;
  text-shadow: 0 0 2px #fff;
  background: #fff;
}

.toolbar .memory svg {
  position: absolute;
  left: 0;
  top: 0;
  width: 100%;
  height: 32px;
}

.memory span {
  position: relative;
}

/* panels */
.workspace {
  height: 898px;
  display: flex;
  gap: 5px;
  padding: 0 5px 0 6px;
  flex-shrink: 0;
}

.left-col {
  width: 571px;
  display: flex;
  flex-direction: column;
  gap: 10px;
}

.right-col {
  flex: 1;
  min-width: 0;
  display: flex;
  flex-direction: column;
}

.panel {
  display: flex;
  flex-direction: column;
  overflow: hidden;
}

.projects {
  height: 448px;
  border: 1px solid #bbb;
  border-top: none;
  background: #fff;
}

.navigator {
  height: 440px;
  border: 1px solid #bbb;
  border-top: none;
  background: #fff;
}

.tabs {
  height: 35px;
  flex-shrink: 0;
  display: flex;
  background: #d3d3d3;
}

.tabs.short {
  height: 31px;
}

.tab {
  display: flex;
  align-items: center;
  padding: 0 16px 0 19px;
  color: #555;
  border-right: 1px solid #c4c4c4;
}

.tab:last-child {
  border-right: none;
}

.tab.active {
  width: 85px;
  padding: 0 9px 0 5px;
  justify-content: space-between;
  background: #f1f1f1;
  color: #222;
  border-right: none;
}

.tab.nav-tab {
  width: 187px;
  padding-bottom: 3px;
  font-size: 15px;
}

.x {
  width: 10px;
  height: 10px;
  margin-left: 6px;
}

.tree {
  padding-top: 1px;
  flex: 1;
  overflow: hidden;
  background: #fff;
}

.row {
  height: 22.500px;
  position: relative;
  display: flex;
  align-items: center;
  white-space: nowrap;
}

.row.selected {
  background: #c9c9c9;
}

.row.short-sel {
  margin-right: 13px;
}

.row.file {
  padding-left: 91px;
}

.row.pk {
  padding-left: 47px;
  letter-spacing: -0.3px;
}

.row.top {
  padding-left: 24px;
}

.chev {
  width: 12px;
  height: 12px;
  flex-shrink: 0;
  margin-right: 9px;
}

.f {
  width: 18px;
  height: 20px;
  margin-right: 11px;
  flex-shrink: 0;
}

.p {
  width: 20px;
  height: 18px;
  margin-right: 10px;
  flex-shrink: 0;
}

/* small mark that sits on the package icon */
.badge {
  position: absolute;
  left: 88px;
  top: 12px;
  width: 8px;
  height: 10px;
}

.d {
  width: 19px;
  height: 18px;
  margin-right: 11px;
  flex-shrink: 0;
}

.members {
  height: 29px;
  flex-shrink: 0;
  display: flex;
  align-items: center;
  justify-content: space-between;
  padding: 0 8px 0 8px;
  background: #fff;
  border: 1px solid #ccc;
  border-radius: 3px;
}

.members svg {
  width: 12px;
  height: 8px;
  margin-right: 292px;
}

.nav-tree {
  padding-top: 0;
}

.row.nf {
  padding-left: 45px;
}

.n {
  width: 20px;
  height: 20px;
  margin-right: 10px;
  flex-shrink: 0;
}

.row.nm {
  padding-left: 73px;
}

.m {
  width: 14px;
  height: 14px;
  margin-right: 11px;
  flex-shrink: 0;
}

em {
  font-style: normal;
  color: #777;
}

.nav-tools {
  height: 40px;
  flex-shrink: 0;
  position: relative;
  display: flex;
  align-items: center;
  padding-left: 13px;
  background: #f1f1f1;
  border-top: 1px solid #ccc;
}

.nt {
  width: 16px;
  height: 24px;
  margin-right: 15px;
}

.nt.w20 {
  width: 20px;
  height: 20px;
  margin: 0 10px 0 2px;
}

.nb {
  width: 28px;
  height: 23px;
  margin-right: 8px;
  display: flex;
  align-items: center;
  justify-content: center;
  background: #d2d2d2;
  border-radius: 3px;
}

.nb svg {
  width: 18px;
  height: 18px;
}

.nsep {
  width: 1px;
  height: 20px;
  margin-right: 7px;
  background: #ccc;
}

.az {
  font-size: 11px;
  font-weight: 700;
}

.blue { fill: #3a7db8; }
.orange { fill: #c88a2a; }

.scroll-down {
  position: absolute;
  left: 277px;
  top: 2px;
  width: 0;
  height: 0;
  border: 5px solid transparent;
  border-top: 6px solid #c4c4c4;
}

/* editor, right of the dialog */
.editor {
  height: 617px;
  border-right: 1px solid #bbb;
}

.doc-tabs {
  height: 35px;
  flex-shrink: 0;
  display: flex;
  align-items: center;
  justify-content: flex-end;
  background: #bcc7d3;
  padding-right: 7px;
}

.ctl {
  width: 10px;
  height: 12px;
}

.ctl.wide {
  width: 12px;
  height: 8px;
}

.ctl.box {
  width: 13px;
  height: 10px;
}

.doc-sep {
  width: 1px;
  height: 24px;
  margin: 0 8px 0 8px;
  background: #b0bac6;
}

.doc-ic {
  width: 17px;
  height: 19px;
  margin-right: 8px;
}

.doc-name {
  width: 128px;
  white-space: nowrap;
  color: #333;
}

.edit-tools {
  height: 32px;
  flex-shrink: 0;
  display: flex;
  align-items: center;
  justify-content: flex-end;
  padding-right: 6px;
  border-bottom: 1px solid #bbb;
}

.edit-tools svg {
  width: 13px;
  height: 8px;
}

.edit-body {
  height: 483px;
  flex-shrink: 0;
  display: flex;
}

.code {
  flex: 1;
  background: #fff;
}

.cur-line {
  height: 23px;
  margin-top: 319px;
  background: #f7f3e3;
}

.sel-line {
  height: 22px;
  margin-top: 89px;
  background: #ddd;
}

.v-scroll {
  width: 12px;
}

.v-scroll i {
  display: block;
  width: 8px;
  height: 22px;
  margin: 434px 0 0 2px;
  background: #ccc;
  border-radius: 3px;
}

.stripe {
  width: 16px;
  height: 483px;
  margin-right: 1px;
}

.find-bar {
  height: 28px;
  flex-shrink: 0;
  margin-top: 12px;
  display: flex;
  align-items: center;
  justify-content: flex-end;
  padding-right: 7px;
  border-top: 1px solid #c4c4c4;
}

.find-bar.low {
  height: 26px;
  margin-top: 0;
  border-bottom: 1px solid #c4c4c4;
}

.x2 {
  width: 10px;
  height: 10px;
  margin-left: 17px;
}

/* output */
.output {
  height: 273px;
  margin-top: 7px;
  border-right: 1px solid #bbb;
  border-bottom: 1px solid #bbb;
  border-left: 1px solid #bbb;
}

.out-head {
  height: 33px;
  flex-shrink: 0;
  display: flex;
  align-items: center;
  justify-content: flex-end;
  padding-right: 7px;
  background: #d2d2d2;
}

.min-line {
  width: 13px;
  height: 1px;
  margin-top: 8px;
  background: #777;
}

.out-tools {
  height: 44px;
  flex-shrink: 0;
  border-top: 1px solid #bbb;
  border-bottom: 1px solid #bbb;
}

.out-body {
  flex: 1;
  display: flex;
}

.console {
  flex: 1;
  min-width: 0;
  margin-left: 33px;
  display: flex;
  flex-direction: column;
  background: #fff;
  font-family: "Liberation Mono", monospace;
  font-size: 15px;
  color: #333;
  overflow: hidden;
}

.line-res {
  height: 20px;
  margin-top: 14px;
  text-align: right;
  padding-right: 143px;
  white-space: nowrap;
  line-height: 20px;
}

.line-exec {
  height: 20px;
  margin-top: 107px;
  padding-left: 9px;
  color: #888;
  white-space: nowrap;
  line-height: 20px;
}

.line-exec b {
  font-weight: 400;
  margin-right: -1px;
  color: #333;
}

.caret {
  width: 2px;
  height: 21px;
  margin: 0 0 0 26px;
  background: #111;
}

.h-scroll {
  height: 12px;
  margin-top: auto;
  background: #f1f1f1;
  padding: 2px 0 0 21px;
}

.h-scroll i {
  display: block;
  width: 290px;
  height: 8px;
  background: #ccc;
  border-radius: 4px;
}

.out-scroll {
  width: 12px;
  flex-shrink: 0;
  background: #f1f1f1;
}

.out-scroll i {
  display: block;
  width: 7px;
  height: 85px;
  margin: 97px 0 0 3px;
  background: #ccc;
  border-radius: 3px;
}

/* status bar */
.statusbar {
  height: 30px;
  flex-shrink: 0;
  display: flex;
  align-items: center;
  justify-content: flex-end;
  padding: 0 113px 2px 0;
}

.run-label {
  margin-right: 7px;
}

.progress {
  width: 249px;
  height: 17px;
  position: relative;
  background: #ccc;
  border-radius: 2px;
  text-align: center;
  font-size: 12px;
  line-height: 17px;
  color: #444;
}

.fill {
  position: absolute;
  left: 0;
  top: 0;
  width: 50%;
  height: 100%;
  background: #2585e0;
  border-radius: 2px 0 0 2px;
}

.progress span {
  position: relative;
}

.stop {
  width: 10px;
  height: 10px;
  margin-left: 13px;
}

.balloon {
  width: 18px;
  height: 22px;
  margin-left: 32px;
}

.bal-num {
  font-size: 11px;
  text-anchor: middle;
}

.st-sep {
  width: 1px;
  height: 20px;
  background: #ccc;
  margin-left: 6px;
}

.pos {
  width: 131px;
  padding-left: 46px;
}

.ins {
  margin-left: 5px;
  width: 27px;
}

.st-sep:last-child {
  margin-left: 0;
}

/* taskbar */
.taskbar {
  height: 59px;
  flex-shrink: 0;
  display: flex;
  align-items: center;
  justify-content: space-between;
  padding-left: 14px;
  background:
    repeating-linear-gradient(101deg, rgba(160, 180, 95, 0.2) 0 1px, transparent 1px 6px),
    repeating-linear-gradient(78deg, rgba(15, 30, 10, 0.28) 0 2px, transparent 2px 9px),
    repeating-linear-gradient(108deg, rgba(190, 200, 110, 0.14) 0 1px, transparent 1px 13px),
    linear-gradient(90deg, #33492a, #435a31 50%, #58703e);
}

.apps {
  display: flex;
}

.app {
  width: 55px;
  height: 59px;
  position: relative;
  display: flex;
  align-items: center;
  justify-content: center;
}

.app svg {
  width: 32px;
  height: 32px;
}

.app.run::after {
  content: "";
  position: absolute;
  left: 25px;
  bottom: 5px;
  width: 5px;
  height: 5px;
  background: #b5b5b5;
  border-radius: 50%;
}

.k-badge {
  font-size: 10px;
  font-weight: 700;
  fill: #fff;
  text-anchor: middle;
  font-family: "Liberation Sans", sans-serif;
}

.ij {
  font-size: 10px;
  font-weight: 700;
  fill: #fff;
  font-family: "Liberation Sans", sans-serif;
}

.tray {
  display: flex;
  align-items: center;
  padding-right: 22px;
  color: #fff;
}

.tr-up {
  width: 14px;
  height: 10px;
}

.tr-pen {
  width: 14px;
  height: 32px;
  margin-left: 23px;
}

.tr-wifi {
  width: 20px;
  height: 20px;
  margin-left: 26px;
}

.tr-vol {
  width: 14px;
  height: 20px;
  margin-left: 7px;
}

.tr-bat {
  width: 20px;
  height: 20px;
  margin-left: 16px;
}

.clock {
  margin-left: 20px;
  text-align: right;
  line-height: 20px;
  font-size: 15px;
  letter-spacing: -0.3px;
  text-shadow: 0 0 2px rgba(0, 0, 0, 0.4);
}

/* dialog window */
.dialog {
  position: absolute;
  left: 281px;
  top: 72px;
  width: 1358px;
  height: 866px;
  display: flex;
  flex-direction: column;
  background: #f3f3f3;
  border: 1px solid #b5b5b5;
  border-radius: 8px;
  overflow: hidden;
}

.dlg-title {
  height: 37px;
  flex-shrink: 0;
  display: flex;
  align-items: center;
  padding: 0 0 2px 8px;
  color: #888;
  font-size: 14.500px;
  letter-spacing: -0.1px;
}

.dlg-ic {
  width: 20px;
  height: 20px;
  margin-right: 6px;
}

.dlg-btns {
  display: flex;
  gap: 45px;
  margin-left: auto;
  margin-right: 22px;
}

.dlg-btns svg {
  width: 14px;
  height: 14px;
}

.dlg-heading {
  height: 103px;
  flex-shrink: 0;
  margin: 0;
  background: #eee;
  text-align: center;
  line-height: 106px;
  font-size: 38px;
  font-weight: 700;
  color: #1976d2;
}

.split {
  flex: 1;
  display: flex;
  min-height: 0;
}

.pane-list {
  width: 603px;
  flex-shrink: 0;
  padding: 20px 17px 0 19px;
  background: #fff;
  border-right: 1px solid #555;
}

.table-wrap {
  height: 610px;
  border: 1px solid #c8c8c8;
  background: #fff;
}

.patients {
  width: 563px;
  table-layout: fixed;
  border-collapse: collapse;
}

.patients th {
  height: 32px;
  padding: 0;
  background: #f3f3f3;
  border-style: solid;
  border-width: 2px 2px 3px 2px;
  border-color: #ccc #9a9a9a #b0b0b0 #e4e4e4;
  font-size: 16.500px;
  font-weight: 700;
  letter-spacing: 0.5px;
  color: #222;
}

.patients td {
  height: 38px;
  padding: 0;
  background: #b8cfe5;
  border-right: 1px solid #7c8a9a;
  border-left: 1px solid #7c8a9a;
  border-bottom: 3px solid #7c8a9a;
  font-family: "Liberation Sans", sans-serif;
  font-size: 14.500px;
  color: #333;
  white-space: nowrap;
  overflow: hidden;
}

.list-btns {
  display: flex;
  gap: 13px;
  margin: 13px 0 0 12px;
}

.btn {
  height: 50px;
  padding: 0;
  background: #fafafa;
  border: 1px solid #6b9de8;
  box-shadow: inset 0 4px 0 #c4cfcf, inset 0 -4px 0 #b9c2c2, inset 2px 0 0 #a9c8f0, inset -2px 0 0 #a9c8f0;
  font-family: inherit;
  font-size: 16.500px;
  font-weight: 700;
  color: #000;
}

.yenile { width: 150px; }
.secimi { width: 181px; }

.pane-form {
  flex: 1;
  padding: 0 26px 0 14px;
  background: #fafafa;
}

.pane-form h2 {
  height: 83px;
  margin: 0;
  line-height: 90px;
  font-size: 26.500px;
  font-weight: 700;
  color: #222;
}

.form-box {
  height: 516px;
  display: grid;
  grid-template-columns: 357px 276px;
  grid-auto-rows: 24px;
  row-gap: 26px;
  padding: 119px 0 0 40px;
  background: #fff;
  border: 1px solid #bbb;
}

.form-box label {
  padding-top: 3px;
  font-size: 15.500px;
  line-height: 22px;
  color: #222;
}

.form-box input {
  width: 276px;
  height: 24px;
  padding: 3px 0 0 2px;
  background: #fff;
  border: 1px solid #7c8a9a;
  border-left-color: #aab;
  border-right-color: #aab;
  outline: none;
  font-family: "Liberation Sans", sans-serif;
  font-size: 14.500px;
  color: #333;
}

.form-box input.readonly {
  padding-top: 0;
  background: #eee;
  border-color: #b8cfe5;
}

.form-btns {
  display: grid;
  grid-template-columns: repeat(4, 1fr);
  gap: 17.500px;
  margin-top: 30px;
}

.copy {
  margin: 0 0 0 2px;
  height: 22px;
  line-height: 22px;
  font-size: 14.600px;
  font-style: italic;
  color: #777;
  white-space: nowrap;
}
```
